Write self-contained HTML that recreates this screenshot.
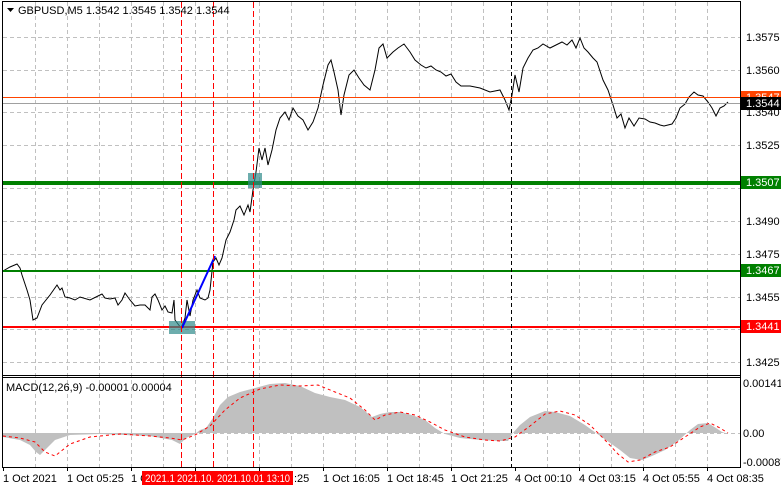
<!DOCTYPE html>
<html><head><meta charset="utf-8"><style>
html,body{margin:0;padding:0;background:#fff;}
svg{display:block;font-family:"Liberation Sans",sans-serif;}
</style></head><body>
<svg width="781" height="489" viewBox="0 0 781 489" xmlns="http://www.w3.org/2000/svg">
<rect width="781" height="489" fill="#fff"/>
<g stroke="#c0c0c0" stroke-dasharray="4,3" stroke-width="1">
<line x1="35.5" y1="2" x2="35.5" y2="467"/><line x1="67.5" y1="2" x2="67.5" y2="467"/><line x1="99.5" y1="2" x2="99.5" y2="467"/><line x1="131.5" y1="2" x2="131.5" y2="467"/><line x1="163.5" y1="2" x2="163.5" y2="467"/><line x1="195.5" y1="2" x2="195.5" y2="467"/><line x1="227.5" y1="2" x2="227.5" y2="467"/><line x1="259.5" y1="2" x2="259.5" y2="467"/><line x1="291.5" y1="2" x2="291.5" y2="467"/><line x1="323.5" y1="2" x2="323.5" y2="467"/><line x1="355.5" y1="2" x2="355.5" y2="467"/><line x1="387.5" y1="2" x2="387.5" y2="467"/><line x1="419.5" y1="2" x2="419.5" y2="467"/><line x1="451.5" y1="2" x2="451.5" y2="467"/><line x1="483.5" y1="2" x2="483.5" y2="467"/><line x1="547.5" y1="2" x2="547.5" y2="467"/><line x1="579.5" y1="2" x2="579.5" y2="467"/><line x1="611.5" y1="2" x2="611.5" y2="467"/><line x1="643.5" y1="2" x2="643.5" y2="467"/><line x1="675.5" y1="2" x2="675.5" y2="467"/><line x1="707.5" y1="2" x2="707.5" y2="467"/>
<line x1="3" y1="37.5" x2="740" y2="37.5"/><line x1="3" y1="70.5" x2="740" y2="70.5"/><line x1="3" y1="112.5" x2="740" y2="112.5"/><line x1="3" y1="145.5" x2="740" y2="145.5"/><line x1="3" y1="188.5" x2="740" y2="188.5"/><line x1="3" y1="221.5" x2="740" y2="221.5"/><line x1="3" y1="254.5" x2="740" y2="254.5"/><line x1="3" y1="297.5" x2="740" y2="297.5"/><line x1="3" y1="329.5" x2="740" y2="329.5"/><line x1="3" y1="362.5" x2="740" y2="362.5"/>
</g>
<polygon fill="#c0c0c0" points="3,433 3,437 20,440 30,445 36,452 40,455 45,450 55,440 70,435 100,434 150,436 172,440 180,444 186,438 195,434 200,430 206,428 213,418 220,405 228,397 240,392 255,388 270,384 285,383 300,386 315,393 330,397 345,400 360,407 372,417 380,414 390,412 400,412 412,415 425,420 435,428 445,434 460,438 480,440 500,441 508,441 512,434 520,425 530,417 545,411 555,412 570,416 585,425 596,433 606,440 620,450 630,458 642,460 652,456 665,450 678,441 690,430 698,424 708,423 716,428 722,432 728,434 728,433"/>
<line x1="3" y1="433.5" x2="740" y2="433.5" stroke="#c0c0c0" stroke-dasharray="4,3"/>
<polyline fill="none" stroke="#ff0000" stroke-width="1" stroke-dasharray="3,3" points="3,436 20,438 35,442 45,452 55,456 70,444 90,437 120,434 150,436 170,438 182,440 195,435 210,426 225,410 240,398 260,389 280,385 300,386 318,385 335,392 350,398 365,410 375,420 385,415 400,412 415,415 430,422 445,430 465,437 485,440 500,441 515,437 530,426 545,414 560,411 575,415 590,425 605,440 618,454 628,462 640,460 655,452 670,447 685,437 700,427 710,423 720,428 728,433"/>
<polyline fill="none" stroke="#000" stroke-width="1" points="3,271 10,267 17,264 20,268 22,275 27,290 30,300 33,320 37,318 42,305 50,295 57,285 60,290 62,288 65,297 70,298 75,300 80,297 90,300 100,295 102,294 105,298 110,299 115,298 118,305 122,300 125,293 130,300 135,306 140,305 145,305 150,310 152,297 155,294 158,300 162,310 165,306 168,312 172,313 174,300 175,320 178,324 181,328 185,318 187,300 190,316 193,300 197,290 200,298 205,300 208,298 210,290 213,262 216,258 219,265 222,258 226,240 230,232 234,220 236,210 240,206 244,215 248,205 250,212 253,190 256,172 259,148 262,160 265,148 268,165 272,150 276,130 280,118 285,112 289,120 293,108 298,116 303,120 308,130 313,122 318,108 323,85 328,65 331,60 334,72 338,90 341,115 344,95 349,75 354,70 359,78 364,85 370,90 375,70 379,48 383,44 387,58 393,52 398,48 404,44 410,52 415,60 421,65 426,68 431,66 436,70 441,72 446,76 451,74 456,82 461,86 470,86 480,88 490,92 500,90 505,100 509,110 512,95 515,75 519,92 523,68 528,58 533,50 538,48 543,44 550,48 556,45 562,42 567,45 572,40 576,48 580,38 584,48 588,52 593,58 597,62 603,80 608,90 613,105 617,118 621,114 625,128 629,118 634,126 639,118 645,119 650,122 655,123 660,125 664,126 668,125 672,124 676,118 680,108 685,104 689,97 694,92 698,95 703,96 708,102 712,108 716,116 720,108 724,106 728,102"/>
<line x1="3" y1="97.5" x2="740" y2="97.5" stroke="#ff4400" stroke-width="1"/>
<line x1="3" y1="103.5" x2="740" y2="103.5" stroke="#a0a0a0" stroke-width="1"/>
<line x1="3" y1="183" x2="740" y2="183" stroke="#008000" stroke-width="4"/>
<line x1="3" y1="271" x2="740" y2="271" stroke="#008000" stroke-width="2"/>
<line x1="3" y1="327" x2="740" y2="327" stroke="#ff0000" stroke-width="2"/>
<rect x="169" y="321" width="26" height="13" fill="#2f8a8a" opacity="0.7"/>
<rect x="248" y="173" width="14" height="15" fill="#2f8a8a" opacity="0.7"/>
<line x1="182" y1="328" x2="215" y2="256" stroke="#0000ff" stroke-width="2"/>
<g stroke="#ff0000" stroke-width="1" stroke-dasharray="6,3"><line x1="181.5" y1="2" x2="181.5" y2="467"/><line x1="213.5" y1="2" x2="213.5" y2="467"/><line x1="253.5" y1="2" x2="253.5" y2="467"/></g>
<line x1="511.5" y1="2" x2="511.5" y2="467" stroke="#000" stroke-dasharray="4,3"/>
<rect x="2.5" y="1.5" width="738" height="466" fill="none" stroke="#000"/>
<line x1="2" y1="375.5" x2="740" y2="375.5" stroke="#000"/>
<line x1="2" y1="377.5" x2="740" y2="377.5" stroke="#000"/>
<g stroke="#000"><line x1="3.5" y1="467" x2="3.5" y2="471"/><line x1="67.5" y1="467" x2="67.5" y2="471"/><line x1="131.5" y1="467" x2="131.5" y2="471"/><line x1="195.5" y1="467" x2="195.5" y2="471"/><line x1="259.5" y1="467" x2="259.5" y2="471"/><line x1="323.5" y1="467" x2="323.5" y2="471"/><line x1="387.5" y1="467" x2="387.5" y2="471"/><line x1="451.5" y1="467" x2="451.5" y2="471"/><line x1="515.5" y1="467" x2="515.5" y2="471"/><line x1="579.5" y1="467" x2="579.5" y2="471"/><line x1="643.5" y1="467" x2="643.5" y2="471"/><line x1="707.5" y1="467" x2="707.5" y2="471"/></g>
<g font-size="11" fill="#000">
<polygon points="7,8 14,8 10.5,12" fill="#000"/>
<text x="18" y="14">GBPUSD,M5  1.3542 1.3545 1.3542 1.3544</text>
<text x="6" y="391">MACD(12,26,9) -0.00001 0.00004</text>
<text x="746" y="41">1.3575</text><text x="746" y="74">1.3560</text><text x="746" y="116">1.3540</text><text x="746" y="149">1.3525</text><text x="746" y="225">1.3490</text><text x="746" y="258">1.3475</text><text x="746" y="301">1.3455</text><text x="746" y="366">1.3425</text>
<text x="743" y="387">0.00141</text><text x="743" y="437">0.00</text><text x="743" y="466">-0.00087</text>
</g>
<rect x="741" y="91" width="40" height="12" fill="#ff4400"/>
<text x="746" y="101" font-size="11" fill="#fff">1.3547</text>
<rect x="741" y="97" width="40" height="13" fill="#000"/>
<text x="746" y="107" font-size="11" fill="#fff">1.3544</text>
<rect x="741" y="176" width="40" height="13" fill="#008000"/>
<text x="746" y="186" font-size="11" fill="#fff">1.3507</text>
<rect x="741" y="264" width="40" height="13" fill="#008000"/>
<text x="746" y="274" font-size="11" fill="#fff">1.3467</text>
<rect x="741" y="320" width="40" height="13" fill="#ff0000"/>
<text x="746" y="330" font-size="11" fill="#fff">1.3441</text>
<g font-size="11" fill="#000">
<text x="3" y="482">1 Oct 2021</text><text x="67" y="482">1 Oct 05:25</text><text x="131" y="482">1 O</text><text x="294" y="482">:25</text><text x="323" y="482">1 Oct 16:05</text><text x="387" y="482">1 Oct 18:45</text><text x="451" y="482">1 Oct 21:25</text><text x="515" y="482">4 Oct 00:10</text><text x="579" y="482">4 Oct 03:15</text><text x="643" y="482">4 Oct 05:55</text><text x="707" y="482">4 Oct 08:35</text>
</g>
<rect x="142" y="471" width="151" height="14" fill="#ff0000"/>
<g font-size="11" fill="#fff"><text x="145" y="482" textLength="30" lengthAdjust="spacingAndGlyphs">2021.1</text><text x="177" y="482" textLength="37" lengthAdjust="spacingAndGlyphs">2021.10.</text><text x="217" y="482" textLength="73" lengthAdjust="spacingAndGlyphs">2021.10.01 13:10</text></g>
</svg>
</body></html>
